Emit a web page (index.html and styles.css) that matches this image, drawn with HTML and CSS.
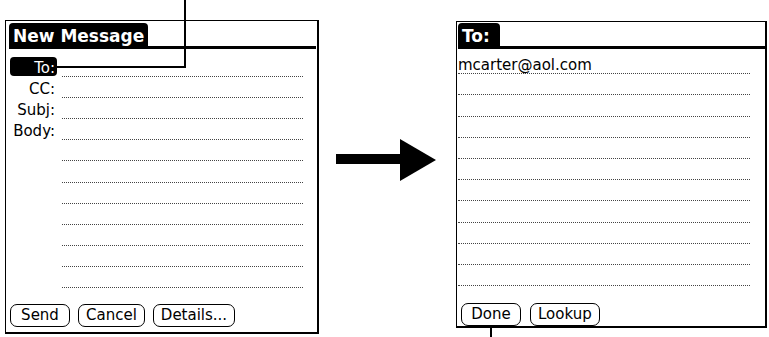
FILE: index.html
```html
<!DOCTYPE html>
<html lang="en">
<head>
    <meta charset="UTF-8">
    <meta name="viewport" content="width=device-width, initial-scale=1.0">
    <title>New Message - To</title>
    <link rel="stylesheet" href="styles.css">
</head>
<body>
    <div class="page">
        <!-- new message form -->
        <div class="screen screen-left">
            <div class="titlebar">
                <span class="title">New Message</span>
                <span class="rule"></span>
            </div>
            <div class="form">
                <div class="row"><span class="label label-active">To:</span><span class="field"></span></div>
                <div class="row"><span class="label">CC:</span><span class="field"></span></div>
                <div class="row"><span class="label">Subj:</span><span class="field"></span></div>
                <div class="row"><span class="label">Body:</span><span class="field"></span></div>
                <div class="row"><span class="label"></span><span class="field"></span></div>
                <div class="row"><span class="label"></span><span class="field"></span></div>
                <div class="row"><span class="label"></span><span class="field"></span></div>
                <div class="row"><span class="label"></span><span class="field"></span></div>
                <div class="row"><span class="label"></span><span class="field"></span></div>
                <div class="row"><span class="label"></span><span class="field"></span></div>
                <div class="row"><span class="label"></span><span class="field"></span></div>
            </div>
            <div class="buttons">
                <button class="btn">Send</button>
                <button class="btn">Cancel</button>
                <button class="btn">Details...</button>
            </div>
        </div>

        <svg class="arrow" width="100" height="42" viewBox="0 0 100 42">
            <rect x="0" y="15" width="65" height="10" fill="#000"/>
            <polygon points="64,0 100,21 64,42" fill="#000"/>
        </svg>

        <!-- To: address screen -->
        <div class="screen screen-right">
            <div class="titlebar">
                <span class="title">To:</span>
                <span class="rule"></span>
            </div>
            <div class="form">
                <div class="row"><span class="field">mcarter@aol.com</span></div>
                <div class="row"><span class="field"></span></div>
                <div class="row"><span class="field"></span></div>
                <div class="row"><span class="field"></span></div>
                <div class="row"><span class="field"></span></div>
                <div class="row"><span class="field"></span></div>
                <div class="row"><span class="field"></span></div>
                <div class="row"><span class="field"></span></div>
                <div class="row"><span class="field"></span></div>
                <div class="row"><span class="field"></span></div>
                <div class="row"><span class="field"></span></div>
            </div>
            <div class="buttons">
                <button class="btn">Done</button>
                <button class="btn">Lookup</button>
            </div>
        </div>

        <div class="callout callout-to"></div>
        <div class="callout callout-done"></div>
    </div>
</body>
</html>
```

FILE: styles.css
```css
body {
    margin: 0;
    background: #fff;
    color: #000;
    font-family: "DejaVu Sans", "Liberation Sans", sans-serif;
    font-size: 15px;
}
.page {
    position: relative;
    display: flex;
    align-items: flex-start;
    width: 769px;
    height: 337px;
    overflow: hidden;
}
.screen {
    box-sizing: border-box;
    display: flex;
    flex-direction: column;
    border: 1px solid #000;
    border-right-width: 2px;
    border-bottom-width: 2px;
}
.screen-left {
    margin: 20px 0 0 5px;
    width: 314px;
    height: 314px;
}
.screen-right {
    margin: 21px 0 0 0;
    width: 311px;
    height: 307px;
}
.titlebar {
    display: flex;
    align-items: flex-end;
    margin: 2px 1px 0 3px;
}
.screen-right .titlebar {
    margin: 1px 0 0 1px;
}
.title {
    background: #000;
    color: #fff;
    font-weight: bold;
    font-size: 17px;
    line-height: 27px;
    height: 26px;
    padding: 0 4px 0 4px;
    border-radius: 4px 4px 0 0;
    white-space: nowrap;
}
.screen-right .title {
    padding: 0 10px 0 4px;
}
.rule {
    flex: 1;
    height: 3px;
    background: #000;
}
.form {
    margin-top: 7px;
}
.screen-right .form {
    margin-top: 4px;
}
.row {
    display: flex;
    height: 21.1px;
}
.screen-right .row {
    height: 21.2px;
}
.label {
    box-sizing: border-box;
    width: 47px;
    margin: 1px 0 0 4px;
    height: 19px;
    padding-right: 2px;
    text-align: right;
    line-height: 22px;
}
.label-active {
    background: #000;
    color: #fff;
    border-radius: 4px;
}
.field {
    flex: 1;
    margin: 0 14px 0 5px;
    border-bottom: 1px dotted #444;
    line-height: 19px;
    white-space: nowrap;
}
.screen-right .field {
    margin: 0 15px 0 1px;
    display: flex;
    align-items: flex-end;
    line-height: 16px;
}
.buttons {
    display: flex;
    gap: 8px;
    margin: 16px 0 0 4px;
}
.screen-right .buttons {
    gap: 9px;
    margin: 17px 0 0 4px;
}
.btn {
    box-sizing: border-box;
    min-width: 60px;
    height: 23px;
    padding: 0 7px;
    background: #fff;
    color: #000;
    border: 1px solid #000;
    border-radius: 7px;
    font-family: "DejaVu Sans", "Liberation Sans", sans-serif;
    font-size: 15px;
    line-height: 21px;
}
.arrow {
    margin: 139px 20px 0 17px;
}
.callout {
    position: absolute;
}
.callout-to {
    left: 57px;
    top: 0;
    width: 127px;
    height: 66px;
    border-right: 2px solid #000;
    border-bottom: 2px solid #000;
}
.callout-done {
    left: 490px;
    top: 326px;
    width: 2px;
    height: 11px;
    background: #000;
}
```
